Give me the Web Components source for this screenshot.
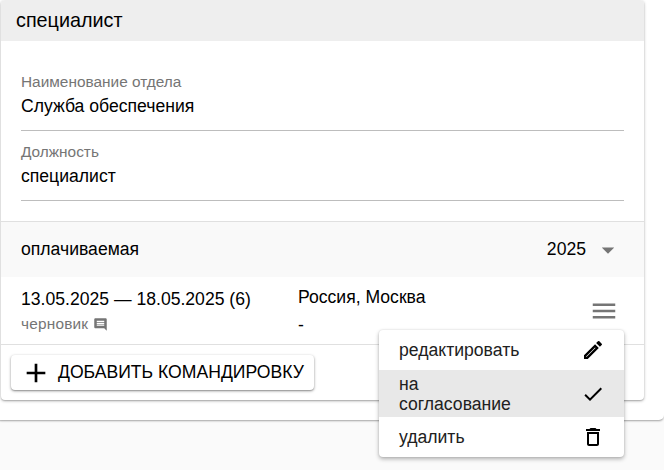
<!DOCTYPE html>
<html lang="ru">
<head>
<meta charset="utf-8">
<style>
  html, body { margin: 0; height: 100%; overflow: hidden; background: #fafafa; }
  body { font-family: "Liberation Sans", Arial, sans-serif; color: #000; }
</style>
</head>
<body>
<trip-page>
  <trip-card>
    <span slot="title">специалист</span>
    <info-field label="Наименование отдела">Служба обеспечения</info-field>
    <info-field label="Должность">специалист</info-field>
    <year-bar slot="bar" label="оплачиваемая" year="2025"></year-bar>
    <trip-row slot="row" dates="13.05.2025 — 18.05.2025 (6)" status="черновик" place="Россия, Москва" note="-"></trip-row>
    <add-button slot="action">ДОБАВИТЬ КОМАНДИРОВКУ</add-button>
  </trip-card>
  <action-menu>
    <menu-item icon="edit">редактировать</menu-item>
    <menu-item icon="check" active>на согласование</menu-item>
    <menu-item icon="trash">удалить</menu-item>
  </action-menu>
</trip-page>
<script>
const ICONS = {
  edit: 'M3 17.25V21h3.75L17.81 9.94l-3.75-3.75L3 17.25zM5.5 18.9l-.4-.4L14.06 9.6l.4.4zM20.71 7.04a1 1 0 0 0 0-1.41l-2.34-2.34a1 1 0 0 0-1.41 0l-1.83 1.83 3.75 3.75 1.83-1.83z',
  check: 'M9 16.17 4.83 12l-1.42 1.41L9 19 21 7l-1.41-1.41z',
  trash: 'M16 9v10H8V9h8m-1.5-6h-5l-1 1H5v2h14V4h-3.5l-1-1zM18 7H6v12c0 1.1.9 2 2 2h8c1.1 0 2-.9 2-2V7z',
  plus: 'M19 13h-6v6h-2v-6H5v-2h6V5h2v6h6v2z',
  comment: 'M21.99 4c0-1.1-.89-2-1.99-2H4c-1.1 0-2 .9-2 2v12c0 1.1.9 2 2 2h14l4 4-.01-18zM18 14H6v-2h12v2zm0-3H6V9h12v2zm0-3H6V6h12v2z',
  menu: 'M3 18h18v-2H3v2zm0-5h18v-2H3v2zm0-7v2h18V6H3z',
  arrow: 'M7 10l5 5 5-5z'
};
const icon = (name, size, color) =>
  `<svg width="${size}" height="${size}" viewBox="0 0 24 24" fill="${color}" style="display:block;flex:none"><path d="${ICONS[name]}"/></svg>`;

function define(tag, render) {
  customElements.define(tag, class extends HTMLElement {
    connectedCallback() {
      if (this.shadowRoot) return;
      this.attachShadow({ mode: 'open' }).innerHTML = render(this);
    }
  });
}

define('trip-page', () => `
  <style>
    :host { display: block; position: relative; height: 470px; }
    .sheet {
      margin-left: -4px; width: 668px; height: 420px; box-sizing: border-box;
      padding-left: 5px; background: #fff; border-radius: 0 0 5px 5px;
      box-shadow: 0 2px 2px -1px rgba(0,0,0,.3), 1px 0 3px rgba(0,0,0,.12);
    }
  </style>
  <div class="sheet"><slot name="card"></slot><slot></slot></div>
`);

define('trip-card', () => `
  <style>
    :host {
      display: block; width: 643px; height: 400px; box-sizing: border-box; background: #fff;
      border-radius: 4px; overflow: hidden;
      box-shadow: 0 1px 3px rgba(0,0,0,.32), 0 1px 1px rgba(0,0,0,.1);
    }
    .head { height: 41px; background: #eee; padding-left: 15px; font-size: 19.8px; line-height: 41px; }
    .fields { padding: 20px 20px 0; height: 180px; box-sizing: border-box; display: flex; flex-direction: column; }
    .foot { border-top: 1px solid #e0e0e0; }
    .action { padding: 10px; }
  </style>
  <div class="head"><slot name="title"></slot></div>
  <div class="fields"><slot></slot></div>
  <div class="foot"><slot name="bar"></slot><slot name="row"></slot></div>
  <div class="action"><slot name="action"></slot></div>
`);

define('info-field', el => `
  <style>
    :host { display: block; height: 70px; flex: none; box-sizing: border-box; border-bottom: 1px solid #bdbdbd; padding-top: 11px; }
    .label { font-size: 15.4px; line-height: 20px; color: #757575; }
    .value { font-size: 17.6px; line-height: 28px; }
  </style>
  <div class="label">${el.getAttribute('label')}</div>
  <div class="value"><slot></slot></div>
`);

define('year-bar', el => `
  <style>
    :host { display: flex; align-items: center; justify-content: space-between; height: 55px; background: #f9f9f9; padding: 0 21px 0 20px; font-size: 17.6px; }
    .year { display: flex; align-items: center; gap: 7px; }
  </style>
  <span>${el.getAttribute('label')}</span>
  <span class="year">${el.getAttribute('year')}${icon('arrow', 30, '#757575')}</span>
`);

define('trip-row', el => `
  <style>
    :host { display: flex; height: 68px; box-sizing: border-box; border-bottom: 1px solid #e0e0e0; padding: 10px 20px 0; font-size: 17.6px; position: relative; }
    .dates { width: 277px; line-height: 24px; }
    .status { display: flex; align-items: center; gap: 5px; color: #757575; font-size: 15.4px; line-height: 26px; letter-spacing: .2px; }
    .place { line-height: 20px; flex: 1; }
    .note { margin-top: 8px; }
    .menu { position: absolute; right: 25px; top: 19px; }
  </style>
  <div class="dates">${el.getAttribute('dates')}
    <div class="status">${el.getAttribute('status')}${icon('comment', 15, '#757575')}</div>
  </div>
  <div class="place">${el.getAttribute('place')}<div class="note">${el.getAttribute('note')}</div></div>
  <div class="menu">${icon('menu', 30, '#757575')}</div>
`);

define('add-button', () => `
  <style>
    :host {
      display: inline-flex; align-items: center; gap: 6px; height: 35px; box-sizing: border-box; padding: 0 10px 0 9px;
      background: #fff; border-radius: 4px; font-size: 17.6px; white-space: nowrap;
      box-shadow: 0 1px 3px rgba(0,0,0,.4), 0 1px 1px rgba(0,0,0,.14);
    }
  </style>
  ${icon('plus', 32, '#000')}
  <span><slot></slot></span>
`);

define('action-menu', () => `
  <style>
    :host {
      position: absolute; left: 379px; top: 330px; width: 245px; background: #fff; border-radius: 4px; overflow: hidden;
      box-shadow: 0 2px 4px rgba(0,0,0,.3), 0 0 2px rgba(0,0,0,.12);
    }
  </style>
  <slot></slot>
`);

define('menu-item', el => `
  <style>
    :host { display: flex; align-items: center; justify-content: space-between; min-height: 40px; box-sizing: border-box; padding: 0 19px 0 20px; font-size: 17.6px; line-height: 20px; color: #212121; }
    :host([active]) { background: #e8e8e8; height: 47px; min-height: 47px; }
    .text { width: 130px; }
  </style>
  <span class="text"><slot></slot></span>
  ${icon(el.getAttribute('icon'), 24, '#000')}
`);
</script>
</body>
</html>
